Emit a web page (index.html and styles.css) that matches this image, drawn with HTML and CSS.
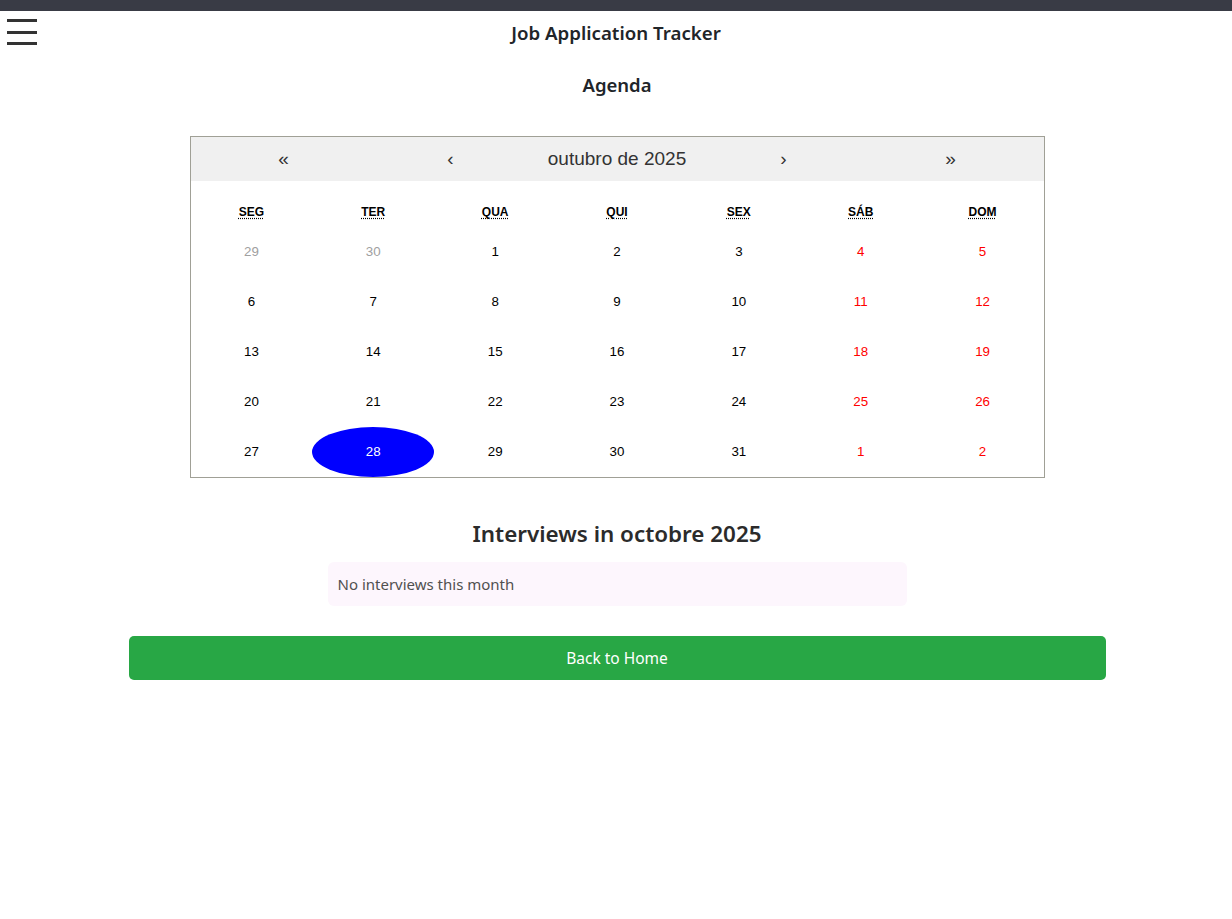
FILE: index.html
```html
<!DOCTYPE html>
<html lang="pt">
<head>
<meta charset="utf-8">
<title>Job Application Tracker</title>
<link rel="stylesheet" href="styles.css">
</head>
<body>
<div class="topbar"></div>
<header class="header">
  <button class="menu" aria-label="Menu">
    <span></span><span></span><span></span>
  </button>
  <h1 class="app-title">Job Application Tracker</h1>
</header>
<main class="main">
  <h2 class="page-title">Agenda</h2>
  <div class="calendar">
    <div class="cal-nav">
      <button class="nav-btn">«</button>
      <button class="nav-btn">‹</button>
      <button class="nav-label">outubro de 2025</button>
      <button class="nav-btn">›</button>
      <button class="nav-btn">»</button>
    </div>
    <div class="weekdays">
      <div class="wd"><abbr title="segunda-feira">SEG</abbr></div>
      <div class="wd"><abbr title="terça-feira">TER</abbr></div>
      <div class="wd"><abbr title="quarta-feira">QUA</abbr></div>
      <div class="wd"><abbr title="quinta-feira">QUI</abbr></div>
      <div class="wd"><abbr title="sexta-feira">SEX</abbr></div>
      <div class="wd"><abbr title="sábado">SÁB</abbr></div>
      <div class="wd"><abbr title="domingo">DOM</abbr></div>
    </div>
    <div class="days">
      <button class="day other">29</button>
      <button class="day other">30</button>
      <button class="day">1</button>
      <button class="day">2</button>
      <button class="day">3</button>
      <button class="day weekend">4</button>
      <button class="day weekend">5</button>

      <button class="day">6</button>
      <button class="day">7</button>
      <button class="day">8</button>
      <button class="day">9</button>
      <button class="day">10</button>
      <button class="day weekend">11</button>
      <button class="day weekend">12</button>

      <button class="day">13</button>
      <button class="day">14</button>
      <button class="day">15</button>
      <button class="day">16</button>
      <button class="day">17</button>
      <button class="day weekend">18</button>
      <button class="day weekend">19</button>

      <button class="day">20</button>
      <button class="day">21</button>
      <button class="day">22</button>
      <button class="day">23</button>
      <button class="day">24</button>
      <button class="day weekend">25</button>
      <button class="day weekend">26</button>

      <button class="day">27</button>
      <button class="day active">28</button>
      <button class="day">29</button>
      <button class="day">30</button>
      <button class="day">31</button>
      <button class="day weekend">1</button>
      <button class="day weekend">2</button>
    </div>
  </div>
  <h2 class="section-title">Interviews in octobre 2025</h2>
  <div class="empty">No interviews this month</div>
  <button class="home-btn">Back to Home</button>
</main>
</body>
</html>
```

FILE: styles.css
```css
* { box-sizing: border-box; }
html, body { margin: 0; padding: 0; background: #fff; }
body {
  font-family: "Noto Sans", "Open Sans", "DejaVu Sans", sans-serif;
  color: #212529;
}
.topbar {
  height: 11px;
  background: #393b45;
}
.header {
  position: relative;
  height: 44px;
  display: flex;
  justify-content: center;
  align-items: center;
}
.menu {
  position: absolute;
  left: 7px;
  top: 8px;
  width: 30px;
  height: 26px;
  padding: 0;
  border: 0;
  background: none;
  display: flex;
  flex-direction: column;
  justify-content: space-between;
}
.menu span {
  display: block;
  height: 3px;
  width: 30px;
  background: #333;
}
.app-title {
  margin: 0;
  font-size: 18.7px;
  font-weight: 600;
  color: #212529;
  line-height: 44px;
}
.main {
  display: flex;
  flex-direction: column;
  align-items: center;
  padding-left: 2px;
}
.page-title {
  margin: 17px 0 0;
  font-size: 18.5px;
  font-weight: 600;
  line-height: 26px;
  color: #212529;
}
.calendar {
  margin-top: 38px;
  width: 855px;
  border: 1px solid #a0a096;
  font-family: "Liberation Sans", Arial, sans-serif;
  background: #fff;
}
.cal-nav {
  display: grid;
  grid-template-columns: 186px 148px 1fr 148px 186px;
  height: 44px;
  background: #f0f0f0;
}
.cal-nav button {
  border: 0;
  background: none;
  font-family: "Liberation Sans", Arial, sans-serif;
  font-size: 19px;
  color: #333;
  padding: 0;
}
.weekdays {
  display: grid;
  grid-template-columns: repeat(7, 1fr);
  height: 46px;
  align-items: end;
  padding-bottom: 8px;
}
.wd {
  text-align: center;
  font-size: 12px;
  font-weight: bold;
  text-transform: uppercase;
  color: #000;
}
.wd abbr {
  text-decoration: underline dotted;
  text-underline-offset: 2px;
}
.days {
  display: grid;
  grid-template-columns: repeat(7, 1fr);
  grid-auto-rows: 50px;
}
.day {
  border: 0;
  background: none;
  font-family: "Liberation Sans", Arial, sans-serif;
  font-size: 13.33px;
  color: #000;
  padding: 0 0 1px;
}
.day.other { color: #a0a0a0; }
.day.weekend { color: #ff0000; }
.day.active {
  background: #0000ff;
  color: #fff;
  border-radius: 50%;
}
.section-title {
  margin: 41px 0 0;
  font-size: 22.4px;
  font-weight: 600;
  line-height: 30px;
  color: #2b2b2b;
}
.empty {
  margin-top: 13px;
  width: 579px;
  height: 44px;
  padding: 0 10px;
  display: flex;
  align-items: center;
  background: #fdf6fd;
  border-radius: 6px;
  font-size: 15px;
  color: #505050;
}
.home-btn {
  margin-top: 30px;
  width: 977px;
  height: 44px;
  border: 0;
  border-radius: 5px;
  background: #28a745;
  color: #fff;
  font-family: "Noto Sans", "Open Sans", sans-serif;
  font-size: 15.5px;
}
```
